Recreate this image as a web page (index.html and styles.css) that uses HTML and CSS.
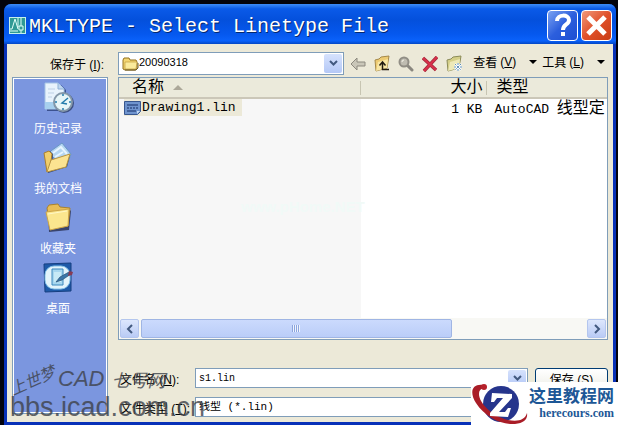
FILE: index.html
```html
<!DOCTYPE html>
<html lang="zh-CN">
<head>
    <meta charset="UTF-8">
    <meta name="viewport" content="width=device-width, initial-scale=1.0">
    <title>MKLTYPE - Select Linetype File</title>
    <link rel="stylesheet" href="styles.css">
</head>
<body>
    <div class="dialog">
        <div class="titlebar">
            <svg class="app-icon" width="17" height="17" viewBox="0 0 17 17">
                <rect x="0.5" y="0.5" width="16" height="16" fill="#2f9a94" stroke="#c5f0ea"/>
                <path d="M1 12h2L6 2l3 10M9 1v9M12 1v8M10 9h4v4h-4zM12 13v3M1 14h8" fill="none" stroke="#e2fffa"/>
            </svg>
            <h1>MKLTYPE - Select Linetype File</h1>
            <button class="caption-btn help" aria-label="Help">
                <svg width="29" height="29" viewBox="0 0 29 29">
                    <path d="M9 10c0-7 12-7 12-1 0 5-6 4-6 10" fill="none" stroke="#fff" stroke-width="4"/>
                    <rect x="13" y="21" width="4" height="4" fill="#fff"/>
                </svg>
            </button>
            <button class="caption-btn close" aria-label="Close">
                <svg width="29" height="29" viewBox="0 0 29 29">
                    <path d="M6 6l17 17M23 6L6 23" stroke="#fff" stroke-width="5"/>
                </svg>
            </button>
        </div>

        <div class="content">
            <div class="toolbar">
                <label class="lookin-label" for="folder">保存于 <span class="key">(<u>I</u>):</span></label>
                <div class="combo lookin">
                    <svg width="17" height="15" viewBox="0 0 17 15">
                        <path d="M1 4l1-2h5l1 2h6l1 2v7l-2 1H3l-2-1z" fill="#f3d672" stroke="#92701f"/>
                        <path d="M3 6h12l-1 7H3z" fill="#fbeb9c" stroke="#c09c3c" stroke-width="0.7"/>
                        <path d="M3 14h11l2-2V7" fill="none" stroke="#6b5a2a"/>
                    </svg>
                    <select id="folder"><option>20090318</option></select>
                    <span class="arrow"><svg width="9" height="7" viewBox="0 0 9 7"><path d="M1 1l3.500 3.500L8 1" fill="none" stroke="#42597f" stroke-width="2"/></svg></span>
                </div>
                <div class="tools">
                    <button aria-label="Back">
                        <svg width="16" height="16" viewBox="0 0 16 16"><path d="M1 8l6-6v4h8v4H7v4z" fill="#c9c6b8" stroke="#8c897f"/></svg>
                    </button>
                    <button aria-label="Up one level">
                        <svg width="16" height="17" viewBox="0 0 16 17">
                            <path d="M1 5l4-1 2-2 8-1-2 12-11 3z" fill="#edcb73" stroke="#a5894a"/>
                            <path d="M4 7l10-3-1 9-11 3z" fill="#f8e6a4"/>
                            <path d="M15 14.500H8.500V8M5.500 10.500l3-3.500 3 3.500" fill="none" stroke="#201a10" stroke-width="1.500"/>
                        </svg>
                    </button>
                    <button aria-label="Search">
                        <svg width="16" height="16" viewBox="0 0 16 16">
                            <path d="M9 9l5 5" stroke="#8a877f" stroke-width="3" stroke-linecap="round"/>
                            <circle cx="6" cy="6" r="4.500" fill="#bfbcb1" stroke="#918e85" stroke-width="2"/>
                            <path d="M4 6a2 2 0 0 1 2-2" fill="none" stroke="#f4f2e8"/>
                        </svg>
                    </button>
                    <button aria-label="Delete">
                        <svg width="16" height="16" viewBox="0 0 16 16"><path d="M1 2l13 12M15 1L2 15" stroke="#a02a3c" stroke-width="3.500"/><path d="M1 2l13 12M15 1L2 15" stroke="#d8304a" stroke-width="2"/></svg>
                    </button>
                    <button aria-label="New folder">
                        <svg width="17" height="17" viewBox="0 0 17 17">
                            <path d="M1 5l4-1 2-2 8-1-2 12-11 3z" fill="#d5cf88" stroke="#8b8b58"/>
                            <path d="M4 7l10-3-1 9-11 3z" fill="#ede9b8"/>
                            <path d="M12 8v8M8 12h8M9 9l6 6M15 9l-6 6" stroke="#fff" stroke-width="2"/>
                            <path d="M12 8v8M8 12h8M9 9l6 6M15 9l-6 6" stroke="#5b8eb8" stroke-dasharray="2 1"/>
                        </svg>
                    </button>
                </div>
                <div class="menus">
                    <button>查看 <span class="key">(<u>V</u>)</span><i></i></button>
                    <button>工具 <span class="key">(<u>L</u>)</span><i></i></button>
                </div>
            </div>

            <div class="panes">
                <nav class="places">
                    <a href="#">
                        <svg width="32" height="32" viewBox="0 0 32 32">
                            <path d="M5 3h14l5 5v21H5z" fill="#3c528f"/>
                            <path d="M3 1h13l6 6v20H3z" fill="#e8f3fc" stroke="#a5c4e4"/>
                            <path d="M3 20h12v7H3z" fill="#a7d0ee"/>
                            <path d="M16 1v6h6" fill="#bed7ef" stroke="#8db0d6"/>
                            <path d="M6 7h7M6 11h6M6 15h4" stroke="#bdd0e5"/>
                            <circle cx="22" cy="21" r="10" fill="#3d4f82"/>
                            <circle cx="21" cy="20" r="9" fill="#e7f6f8" stroke="#8498a9" stroke-width="2"/>
                            <path d="M26 16l-6 5 5 1M21 12v2M21 26v2M13 20h2M27 20h2" fill="none" stroke="#247cac" stroke-width="1.500"/>
                        </svg>
                        <span>历史记录</span>
                    </a>
                    <a href="#">
                        <svg width="32" height="32" viewBox="0 0 32 32">
                            <path d="M6 11L20 1l9 11-5 14z" fill="#b5d6f1" stroke="#6a96c5"/>
                            <path d="M11 11l8-6 6 7M13 15l8-5" fill="none" stroke="#e7f5ff" stroke-width="2"/>
                            <path d="M3 13l5-4 3 3-1 12 18-11-3 12L6 31z" fill="#2f4479"/>
                            <path d="M2 11l5-2 3 3-2 14-3 4z" fill="#f0cd6a" stroke="#ab802e"/>
                            <path d="M9 18l19-6-4 13L5 30z" fill="#fbe391" stroke="#b89442"/>
                        </svg>
                        <span>我的文档</span>
                    </a>
                    <a href="#">
                        <svg width="32" height="32" viewBox="0 0 32 32">
                            <path d="M6 8l21-1 2 2-2 19-20 2z" fill="#39446d"/>
                            <path d="M5 6l2-3 9-1 2 3 10 1-2 18-18 3z" fill="#e8bd55" stroke="#a9822e"/>
                            <path d="M4 10l23-3-1 17-18 4z" fill="#fbe68e" stroke="#cca54a"/>
                            <path d="M6 12l19-3" stroke="#fff7c6"/>
                        </svg>
                        <span>收藏夹</span>
                    </a>
                    <a href="#">
                        <svg width="32" height="32" viewBox="0 0 32 32">
                            <path d="M2 2l27-1v28l-26 1z" fill="#1e5aa8" stroke="#163f80"/>
                            <rect x="3" y="4" width="25" height="23" rx="9" fill="#e3f4fb" stroke="#86c3e8"/>
                            <path d="M10 7h11v16H10z" fill="#a7d7ef" stroke="#3c88bc"/>
                            <path d="M12 10h7v10h-7z" fill="#c7eaf6"/>
                            <path d="M14 20l4-5 9-5 2 2-9 6z" fill="#3b77a8" stroke="#275075" stroke-width="0.7"/>
                            <path d="M27 9l4 1-1 3-4 1z" fill="#873b54"/>
                        </svg>
                        <span>桌面</span>
                    </a>
                </nav>

                <main>
                    <div class="filelist">
                        <table>
                            <thead>
                                <tr>
                                    <th class="col-name">名称<span class="sort"></span></th>
                                    <th class="col-size">大小</th>
                                    <th class="col-type">类型</th>
                                </tr>
                            </thead>
                            <tbody>
                                <tr>
                                    <td class="col-name"><span class="file"><svg width="17" height="14" viewBox="0 0 17 14">
                                        <path d="M0.500 0.500h16v10l-3 3h-13z" fill="#6f94ce" stroke="#38578f"/>
                                        <path d="M3 4h11M3 7h2M6 7h2M9 7h2M12 7h2M3 10h9" stroke="#172f66"/>
                                        <path d="M13 13v-3h3" fill="#c5daf3"/>
                                    </svg>Drawing1.lin</span></td>
                                    <td class="col-size">1 KB</td>
                                    <td class="col-type">AutoCAD <span class="cjk">线型定</span></td>
                                </tr>
                            </tbody>
                        </table>
                        <p class="faint-mark">www.pHome.NET</p>
                        <div class="scrollbar">
                            <button aria-label="Scroll left"><svg width="8" height="10" viewBox="0 0 8 10"><path d="M6 1L2 5l4 4" fill="none" stroke="#42597f" stroke-width="2"/></svg></button>
                            <div class="track"><div class="thumb"></div></div>
                            <button aria-label="Scroll right"><svg width="8" height="10" viewBox="0 0 8 10"><path d="M2 1l4 4-4 4" fill="none" stroke="#42597f" stroke-width="2"/></svg></button>
                        </div>
                    </div>

                    <div class="form">
                        <label for="filename">文件名 <span class="key">(<u>N</u>):</span></label>
                        <div class="combo">
                            <input type="text" id="filename" value="s1.lin">
                            <button class="arrow" aria-label="Recent names"><svg width="9" height="7" viewBox="0 0 9 7"><path d="M1 1l3.500 3.500L8 1" fill="none" stroke="#42597f" stroke-width="2"/></svg></button>
                        </div>
                        <button class="push">保存 <span class="key">(<u>S</u>)</span></button>
                        <label for="filetype">文件类型 <span class="key">(<u>T</u>):</span></label>
                        <div class="combo">
                            <select id="filetype"><option>线型 (*.lin)</option></select>
                        </div>
                    </div>
                </main>
            </div>
        </div>
    </div>

    <!-- forum watermark -->
    <div class="forum-mark">
        <div class="script"><span class="tilt">上世梦</span><span class="cad">CAD</span><span class="brush">七号网</span></div>
        <div class="url">bbs.icad.com.cn</div>
    </div>

    <!-- site badge -->
    <div class="site-badge">
        <svg width="58" height="43" viewBox="0 0 58 43">
            <circle cx="30" cy="22" r="18" fill="#26358c"/>
            <path d="M13 3C1 1-2 10 5 21c9 14 25 22 39 21 9-1 13-5 12-11-2 7-9 9-19 7C21 34 8 21 8 12c0-4 2-6 6-5z" fill="#a91d27"/>
            <circle cx="13" cy="5" r="3" fill="#b6212b"/>
            <path d="M21 11l20 1v4L28 30h6l3-4h3l-3 9-18-1v-3l13-15h-6l-3 4h-3z" fill="#fff"/>
        </svg>
        <div class="site-name">
            <strong>这里教程网</strong>
            <span>herecours.com</span>
        </div>
    </div>
</body>
</html>
```

FILE: styles.css
```css
:root {
    --face: #ece9d8;
    --line: #7f9db9;
    --ui: "Liberation Sans", "Noto Sans CJK SC", sans-serif;
    --mono: "Liberation Mono", "Noto Sans CJK SC", monospace;
}
* {
    box-sizing: border-box;
}
body {
    margin: 0;
    min-height: 100vh;
    padding: 4px 2px 0 4px;
    display: flex;
    background: #03030c;
    font-family: var(--ui);
    font-size: 12px;
    color: #000;
    overflow: hidden;
}
button, input, select {
    font: inherit;
    color: inherit;
    margin: 0;
    padding: 0;
    border: none;
    background: none;
    border-radius: 0;
}
svg {
    display: block;
    flex: none;
}

/* Window frame */
.dialog {
    flex: 1;
    display: flex;
    flex-direction: column;
    padding: 0 3px 3px;
    background: #0831b8;
    border-radius: 7px 7px 0 0;
}
.titlebar {
    display: flex;
    align-items: center;
    gap: 3px;
    height: 40px;
    margin: 0 -3px;
    padding: 2px 4px 0 5px;
    border-radius: 7px 7px 0 0;
    background: linear-gradient(#3d8cf8, #0a5ae8 12%, #0450dc 40%, #0558ee 75%, #0a62fb 92%, #0347c4);
}
.titlebar h1 {
    flex: 1;
    margin: 0;
    padding-top: 2px;
    font-family: var(--mono);
    font-size: 20px;
    font-weight: normal;
    white-space: nowrap;
    color: #fff;
    text-shadow: 1px 1px #04286e;
}
.caption-btn {
    width: 31px;
    height: 31px;
    border: 1px solid #fff;
    border-radius: 4px;
}
.help {
    background: linear-gradient(135deg, #7ba2f2, #2c5fdd 50%, #1d4ed2);
}
.close {
    background: linear-gradient(135deg, #f09a7c, #e0502a 50%, #c93c14);
}
.content {
    flex: 1;
    display: flex;
    flex-direction: column;
    gap: 2px;
    padding: 8px 5px 5px;
    background: var(--face);
}

/* Toolbar */
.toolbar {
    display: flex;
    align-items: center;
    height: 23px;
}
.lookin-label {
    width: 106px;
    padding-right: 14px;
    text-align: right;
}
.combo {
    display: flex;
    align-items: center;
    height: 20px;
    padding: 1px;
    border: 1px solid var(--line);
    background: #fff;
}
.combo select,
.combo input {
    flex: 1;
    min-width: 0;
    height: 100%;
    padding-left: 2px;
    appearance: none;
    outline: none;
}
.arrow {
    width: 18px;
    height: 100%;
    display: flex;
    align-items: center;
    justify-content: center;
    border-radius: 2px;
    background: linear-gradient(#d6e2fd, #b4c8f6);
    pointer-events: none;
}
.lookin {
    flex: 1;
    height: 23px;
    padding-left: 3px;
}
.lookin select {
    padding: 0 0 3px;
    font-size: 11px;
}
.tools {
    display: flex;
    align-items: center;
    gap: 8px;
    padding: 0 10px 0 6px;
}
.menus {
    display: flex;
    gap: 5px;
    padding: 0 3px 4px 0;
}
.menus button {
    display: flex;
    align-items: center;
    gap: 3px;
    white-space: nowrap;
}
.menus i {
    margin-left: 10px;
    border: 4px solid transparent;
    border-top-color: #000;
    border-bottom: none;
}

/* Places bar */
.panes {
    flex: 1;
    display: flex;
    gap: 10px;
}
.places {
    width: 96px;
    margin-bottom: 3px;
    padding-right: 4px;
    border: 1px solid var(--line);
    box-shadow: inset 0 0 0 1px #fff;
    background: #7b96df;
}
.places a {
    display: flex;
    flex-direction: column;
    align-items: center;
    gap: 8px;
    height: 60px;
    padding-top: 4px;
    line-height: 14px;
    color: #fff;
    text-decoration: none;
}

/* File list */
main {
    flex: 1;
    min-width: 0;
    display: flex;
    flex-direction: column;
    gap: 28px;
}
.filelist {
    flex: 1;
    display: flex;
    flex-direction: column;
    border: 1px solid var(--line);
    background: linear-gradient(90deg, #f7f7f7 49.5%, #fff 49.5%);
}
table {
    width: 100%;
    table-layout: fixed;
    border-collapse: collapse;
    font-family: var(--mono);
    font-size: 13px;
}
th {
    height: 20px;
    padding: 1px 0 0;
    border-bottom: 2px solid #cbc7b8;
    background: #ebeadb;
    font-size: 16px;
    font-weight: normal;
    line-height: 18px;
    text-align: left;
}
th:not(:last-child) {
    background: linear-gradient(#c7c5b2, #c7c5b2) right center / 1px 14px no-repeat #ebeadb;
}
td {
    height: 19px;
    padding: 0;
    line-height: 19px;
    white-space: nowrap;
    overflow: hidden;
}
.col-name {
    width: 49.5%;
}
.col-size {
    width: 26%;
    padding-right: 5px;
    text-align: right;
}
.col-type {
    padding-left: 7px;
}
th.col-name {
    padding-left: 13px;
}
th.col-type {
    padding-left: 9px;
}
.cjk {
    font-size: 16px;
}
.sort {
    display: inline-block;
    margin-left: 9px;
    vertical-align: middle;
    border: 5px solid transparent;
    border-top: none;
    border-bottom-color: #aca899;
}
.file {
    display: inline-flex;
    align-items: center;
    gap: 1px;
    height: 17px;
    margin-left: 5px;
    padding-right: 6px;
    background: #ece9d8;
}
.faint-mark {
    flex: 1;
    margin: 77px 0 0 122px;
    font-size: 15px;
    font-weight: bold;
    color: #f1faf7;
}
.scrollbar {
    display: flex;
    height: 21px;
    padding: 1px;
    background: #f8f8f4;
}
.scrollbar button {
    width: 19px;
    display: flex;
    align-items: center;
    justify-content: center;
    border: 1px solid #b4c6ee;
    border-radius: 2px;
    background: linear-gradient(#dde7fd, #b9cbf5);
}
.track {
    flex: 1;
    padding: 0 2px;
}
.thumb {
    width: 70%;
    height: 100%;
    border: 1px solid #9fb5e4;
    border-radius: 2px;
    background:
        repeating-linear-gradient(90deg, #8ca5de 0 1px, #eef4fe 1px 2px) center / 8px 7px no-repeat,
        linear-gradient(#cbdafd, #bacdf8);
}

/* Name and type fields */
.form {
    display: grid;
    grid-template-columns: 77px 1fr 73px;
    row-gap: 9px;
    align-items: center;
}
.form label {
    padding-left: 2px;
    white-space: nowrap;
}
.form .combo {
    margin-right: 7px;
}
.form input {
    font-family: var(--mono);
    font-size: 10px;
}
.form select {
    font-family: var(--mono);
    font-size: 11px;
}
.push {
    height: 20px;
    border: 1px solid #003c74;
    border-radius: 3px;
    background: linear-gradient(#fff, #f0f0ea);
}

/* Overlaid marks */
.forum-mark {
    position: absolute;
    left: 8px;
    bottom: 4px;
    color: #3e424a;
    opacity: 0.8;
    white-space: nowrap;
    pointer-events: none;
}
.script {
    display: flex;
    align-items: center;
    height: 28px;
    font-family: "Liberation Serif", "Noto Sans CJK SC", serif;
    font-size: 16px;
}
.tilt {
    width: 50px;
    font-style: italic;
    transform: rotate(-24deg);
}
.cad {
    font-family: var(--ui);
    font-size: 22px;
    font-style: italic;
}
.brush {
    margin-left: 7px;
    font-style: italic;
    font-size: 18px;
}
.url {
    padding-left: 2px;
    font-size: 27px;
    line-height: 28px;
}
.site-badge {
    position: absolute;
    right: 0;
    bottom: 0;
    display: flex;
    width: 147px;
    height: 43px;
    background: #fff;
}
.site-name {
    display: flex;
    flex-direction: column;
    align-items: flex-end;
    padding-top: 3px;
    color: #1d5796;
}
.site-name strong {
    font-family: "Noto Sans CJK SC", sans-serif;
    font-size: 17px;
    line-height: 20px;
}
.site-name span {
    font-family: "Liberation Serif", serif;
    font-size: 12px;
    font-weight: bold;
    line-height: 16px;
}
```
